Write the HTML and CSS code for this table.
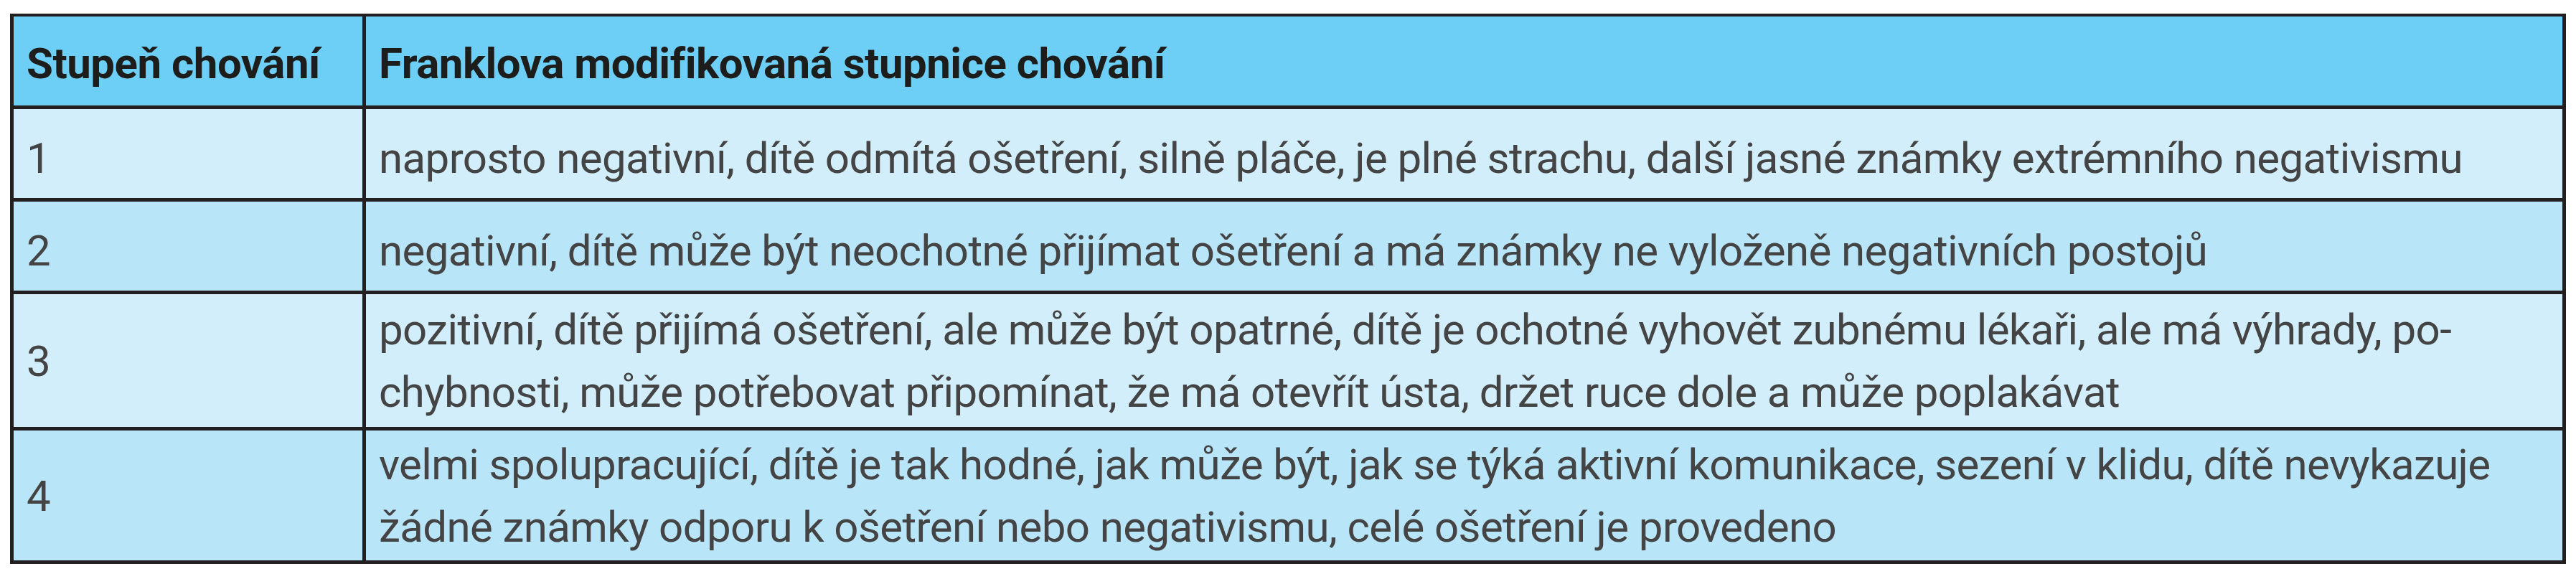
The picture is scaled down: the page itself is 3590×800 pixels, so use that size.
FILE: index.html
```html
<!DOCTYPE html>
<html lang="cs">
<head>
<meta charset="utf-8">
<title>Franklova modifikovaná stupnice chování</title>
<link rel="stylesheet" href="styles.css">
</head>
<body>
<table class="scale">
  <thead>
    <tr class="head">
      <th class="c1">Stupeň chování</th>
      <th class="c2">Franklova modifikovaná stupnice chování</th>
    </tr>
  </thead>
  <tbody>
    <tr class="light single">
      <td class="c1">1</td>
      <td class="c2">naprosto negativní, dítě odmítá ošetření, silně pláče, je plné strachu, další jasné známky extrémního negativismu</td>
    </tr>
    <tr class="medium single">
      <td class="c1">2</td>
      <td class="c2">negativní, dítě může být neochotné přijímat ošetření a má známky ne vyloženě negativních postojů</td>
    </tr>
    <tr class="light multi">
      <td class="c1">3</td>
      <td class="c2">pozitivní, dítě přijímá ošetření, ale může být opatrné, dítě je ochotné vyhovět zubnému lékaři, ale má výhrady, po-<br>chybnosti, může potřebovat připomínat, že má otevřít ústa, držet ruce dole a může poplakávat</td>
    </tr>
    <tr class="medium multi last">
      <td class="c1">4</td>
      <td class="c2">velmi spolupracující, dítě je tak hodné, jak může být, jak se týká aktivní komunikace, sezení v klidu, dítě nevykazuje<br>žádné známky odporu k ošetření nebo negativismu, celé ošetření je provedeno</td>
    </tr>
  </tbody>
</table>
</body>
</html>
```

FILE: styles.css
```css
html, body {
  margin: 0;
  background: #ffffff;
}

body {
  padding: 19px 0 0 14px;
  font-family: Roboto, "Liberation Sans", sans-serif;
}

.scale {
  border-collapse: separate;
  border-spacing: 0;
  table-layout: fixed;
  width: 3562px;
  border: 5px solid #231f20;
  border-top-width: 4px;
}

.scale th,
.scale td {
  box-sizing: border-box;
  text-align: left;
  vertical-align: top;
  font-size: 60px;
  line-height: 87px;
  padding: 25px 18px 12px;
  border-bottom: 5px solid #231f20;
}

.scale .c1 {
  width: 491px;
  border-right: 5px solid #231f20;
}

.scale tbody tr.last td {
  border-bottom: 0;
}

.head th {
  background: #6ecff6;
  color: #1d1d1b;
  font-weight: 700;
  letter-spacing: -0.5px;
  padding-top: 22px;
  padding-bottom: 15px;
}

.scale td {
  color: #444444;
  font-weight: 400;
  letter-spacing: -0.6px;
}

.light td {
  background: #d3eefb;
}

.medium td {
  background: #b9e5f9;
}

.multi td {
  padding-top: 6px;
  padding-bottom: 5px;
}

.multi .c1 {
  vertical-align: middle;
}

.multi.last td {
  padding-top: 4px;
  padding-bottom: 3px;
}
```
